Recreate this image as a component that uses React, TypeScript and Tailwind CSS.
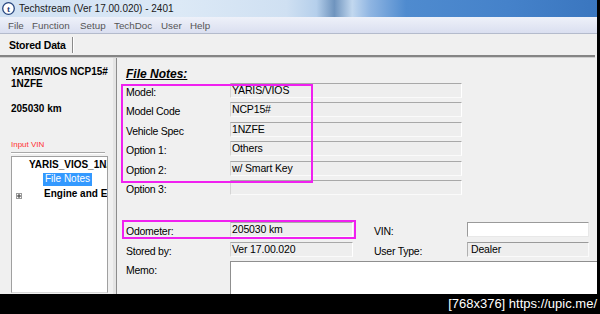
import React from "react";

const rows: [string, string][] = [
  ["Model:", "YARIS/VIOS"],
  ["Model Code", "NCP15#"],
  ["Vehicle Spec", "1NZFE"],
  ["Option 1:", "Others"],
  ["Option 2:", "w/ Smart Key"],
  ["Option 3:", ""],
];

const font = { fontFamily: '"Liberation Sans", Arial, sans-serif' };

function Label({ children }: { children: React.ReactNode }) {
  return (
    <div className="w-[104px] shrink-0 mt-[3px] leading-[13px] text-[10.5px] tracking-[-0.25px] text-black whitespace-nowrap">
      {children}
    </div>
  );
}

export default function App() {
  return (
    <div className="w-[600px] h-[314px] bg-black flex flex-col overflow-hidden" style={font}>
      <div className="flex h-[294px] shrink-0">
        <div className="w-[597px] flex flex-col bg-[#f0f0f0]">
          {/* Title bar */}
          <div className="h-[17px] shrink-0 flex items-start bg-[linear-gradient(to_right,#d0e1f3_0%,#dce9f6_30%,#cfe0f2_48%,#b5cfeb_53%,#6f94be_56%,#c2d8ef_59%,#8fb5e2_62%,#4f8bcf_68%,#4582ca_85%,#3a76bf_100%)]">
            <svg width="13" height="13" viewBox="0 0 13 13" className="ml-[2px] mt-[2px] shrink-0">
              <circle cx="6.5" cy="6.5" r="5.8" fill="#ffffff" stroke="#27467f" strokeWidth="1.3" />
              <text x="6.6" y="10" textAnchor="middle" fontSize="9" fontWeight="bold" fill="#1d3a78" fontFamily="Liberation Serif, serif">t</text>
            </svg>
            <span className="ml-[4px] pt-[2px] leading-[14px] text-[10px] text-[#1a1a1a] whitespace-nowrap">
              Techstream (Ver 17.00.020) - 2401
            </span>
          </div>
          {/* Menu bar */}
          <div className="h-[17px] shrink-0 flex pl-[8px] bg-[linear-gradient(to_bottom,#eef1f9,#dadff0)] border-b border-[#b4bbcc] text-[9.8px] leading-[15px] text-[#555] whitespace-nowrap">
            <span className="w-[24px] pt-[1px]">File</span>
            <span className="w-[48px] pt-[1px]">Function</span>
            <span className="w-[34px] pt-[1px]">Setup</span>
            <span className="w-[47px] pt-[1px]">TechDoc</span>
            <span className="w-[29px] pt-[1px]">User</span>
            <span className="pt-[1px]">Help</span>
          </div>
          {/* Toolbar */}
          <div className="h-[21px] shrink-0 flex items-start pl-[9px] bg-[#f0f0f0]">
            <span className="pt-[4px] leading-[14px] text-[10.5px] font-bold tracking-[-0.2px] text-black whitespace-nowrap">
              Stored Data
            </span>
            <div className="ml-[6px] mt-[3px] h-[16px] w-[2px] border-l border-r border-l-[#8a8a8a] border-r-white" />
          </div>
          {/* Separator */}
          <div className="h-[3px] shrink-0 mr-[2px] border-t-2 border-[#858585] bg-[#cfcfcf]" />
          {/* Body */}
          <div className="flex-1 flex min-h-0">
            {/* Left panel */}
            <div className="w-[113px] shrink-0 flex flex-col pl-[11px] pr-[5px] bg-[#f0f0f0]">
              <div className="pt-[8px] text-[10px] font-bold leading-[12px] text-black whitespace-nowrap">
                <div>YARIS/VIOS NCP15#</div>
                <div>1NZFE</div>
                <div className="mt-[13px]">205030 km</div>
              </div>
              <div className="mt-[25px] text-[8px] leading-[10px] text-[#ff3030]">Input VIN</div>
              <div className="mt-[2px] mr-[3px] h-[2px] border-t border-[#a8a8a8] border-b border-b-white" />
              <div className="mt-[2px] mb-[1px] flex-1 bg-white border border-[#a0a0a0] border-b-[#d8d8d8] overflow-hidden text-[10px] leading-[12px] whitespace-nowrap">
                <div className="pt-[2px] pl-[17px] font-bold text-black">YARIS_VIOS_1NZFE</div>
                <div className="mt-[2px] pl-[31px] flex">
                  <span className="bg-[#3399ff] text-white px-[2px] h-[13px] leading-[12.5px]">File Notes</span>
                </div>
                <div className="mt-[2px] flex items-center">
                  <div className="ml-[4px] mt-[4px] w-[6px] h-[6px] border border-[#9a9a9a] flex items-center justify-center">
                    <svg width="4" height="4" viewBox="0 0 4 4">
                      <path d="M0 2H4M2 0V4" stroke="#333" strokeWidth="1" />
                    </svg>
                  </div>
                  <span className="ml-[22px] font-bold text-black">Engine and ECU</span>
                </div>
              </div>
            </div>
            {/* Divider */}
            <div className="w-[4px] shrink-0 bg-[#e4e4e4] border-r border-[#8c8c8c]" />
            {/* Main */}
            <div className="relative flex-1 flex flex-col pl-[9px] bg-[#f0f0f0] min-w-0">
              <div className="mt-[9px] text-[12px] leading-[14px] font-bold italic underline text-black">File Notes:</div>
              <div className="mt-[2px] flex flex-col">
                {rows.map(([l, v]) => (
                  <div key={l} className="h-[19.4px] flex items-start">
                    <Label>{l}</Label>
                    <div className="w-[232px] h-[15px] border-t border-l border-t-[#a8a8a8] border-l-[#d4d4d4] border-r border-b border-r-white border-b-[#fafafa] bg-[#eeeeee] pl-[1px] text-[10.5px] leading-[13px] tracking-[-0.15px] text-black whitespace-nowrap">
                      {v}
                    </div>
                  </div>
                ))}
              </div>
              <div className="mt-[23px] flex flex-col">
                <div className="h-[19.4px] flex items-start">
                  <Label>Odometer:</Label>
                  <div className="w-[123px] shrink-0 h-[15px] border-t border-l border-t-[#a8a8a8] border-l-[#d4d4d4] border-r border-b border-r-white border-b-[#fafafa] bg-[#eeeeee] pl-[1px] text-[10.5px] leading-[13px] tracking-[-0.15px] text-black whitespace-nowrap">
                    205030 km
                  </div>
                  <div className="ml-[21px] w-[93px] shrink-0 mt-[3px] leading-[13px] text-[10.5px] tracking-[-0.25px] text-black">VIN:</div>
                  <div className="w-[122px] shrink-0 h-[15px] bg-white border-t border-l border-[#9a9a9a] border-r border-b border-r-[#e8e8e8] border-b-[#e8e8e8]" />
                </div>
                <div className="h-[19.4px] flex items-start">
                  <Label>Stored by:</Label>
                  <div className="w-[123px] shrink-0 h-[15px] border-t border-l border-t-[#a8a8a8] border-l-[#d4d4d4] border-r border-b border-r-white border-b-[#fafafa] bg-[#eeeeee] pl-[1px] text-[10.5px] leading-[13px] tracking-[-0.15px] text-black whitespace-nowrap">
                    Ver 17.00.020
                  </div>
                  <div className="ml-[21px] w-[93px] shrink-0 mt-[3px] leading-[13px] text-[10.5px] tracking-[-0.25px] text-black">User Type:</div>
                  <div className="w-[122px] shrink-0 h-[15px] border-t border-l border-t-[#9a9a9a] border-l-[#b0b0b0] border-r border-b border-r-[#fafafa] border-b-[#fafafa] bg-[#eeeeee] pl-[3px] text-[10.5px] leading-[13px] tracking-[-0.15px] text-black">
                    Dealer
                  </div>
                </div>
              </div>
              <div className="flex-1 flex items-start min-h-0">
                <Label>Memo:</Label>
                <div className="flex-1 h-full bg-white border-t border-l border-[#8f8f8f]" />
              </div>
              {/* Highlight boxes */}
              <div className="absolute left-[4px] top-[26px] w-[192px] h-[99px] border-2 border-[#f020f0] pointer-events-none" />
              <div className="absolute left-[5px] top-[162px] w-[234px] h-[19px] border-2 border-[#f020f0] pointer-events-none" />
            </div>
          </div>
        </div>
      </div>
      <div className="h-[20px] flex justify-end pr-[3px] text-white text-[13px] leading-[20px] whitespace-nowrap">
        [768x376] https://upic.me/
      </div>
    </div>
  );
}
